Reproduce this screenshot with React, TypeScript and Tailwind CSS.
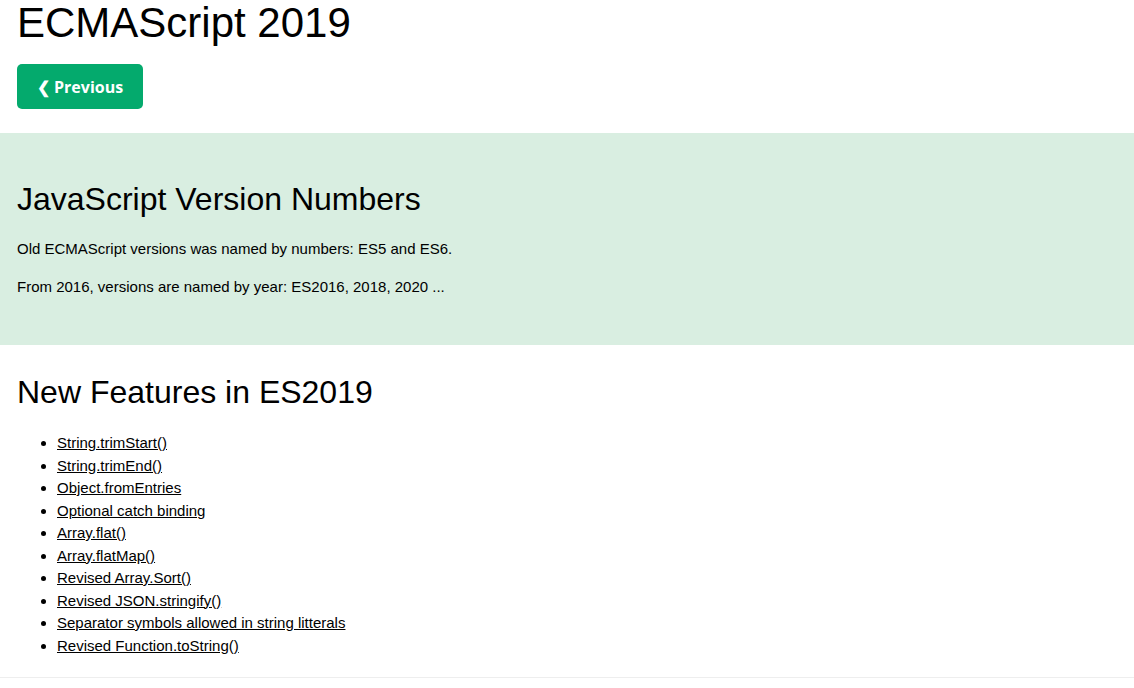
const features = [
  "String.trimStart()",
  "String.trimEnd()",
  "Object.fromEntries",
  "Optional catch binding",
  "Array.flat()",
  "Array.flatMap()",
  "Revised Array.Sort()",
  "Revised JSON.stringify()",
  "Separator symbols allowed in string litterals",
  "Revised Function.toString()",
];

export default function App() {
  return (
    <div
      className="min-h-[688px] bg-white text-black"
      style={{ fontFamily: "'Liberation Sans', Arial, sans-serif" }}
    >
      <div className="px-[17px]">
        <h1 className="text-[42px] leading-[46px] font-normal">ECMAScript 2019</h1>
        <div className="mt-[18px]">
          <a
            href="#"
            className="inline-flex h-[45px] w-[126px] items-center justify-center rounded-[5px] bg-[#04AA6D] text-[16px] font-bold text-white"
            style={{ fontFamily: "'Open Sans', 'Noto Sans', sans-serif" }}
          >
            ❮ Previous
          </a>
        </div>
      </div>

      <div className="mt-6 bg-[#D9EEE1] px-[17px] pt-[46px] pb-[47px]">
        <h2 className="text-[32px] leading-[40px] font-normal">JavaScript Version Numbers</h2>
        <p className="mt-[19px] text-[15px] leading-[22.5px]">
          Old ECMAScript versions was named by numbers: ES5 and ES6.
        </p>
        <p className="mt-[15px] text-[15px] leading-[22.5px]">
          From 2016, versions are named by year: ES2016, 2018, 2020 ...
        </p>
      </div>

      <div className="px-[17px] pt-[27px]">
        <h2 className="text-[32px] leading-[40px] font-normal">New Features in ES2019</h2>
        <ul className="mt-5 list-disc pl-10 text-[15px] leading-[22.5px]">
          {features.map((f) => (
            <li key={f}>
              <a href="#" className="text-black underline">
                {f}
              </a>
            </li>
          ))}
        </ul>
      </div>
      <hr className="mt-5 border-0 border-t border-[#eeeeee]" />
    </div>
  );
}
